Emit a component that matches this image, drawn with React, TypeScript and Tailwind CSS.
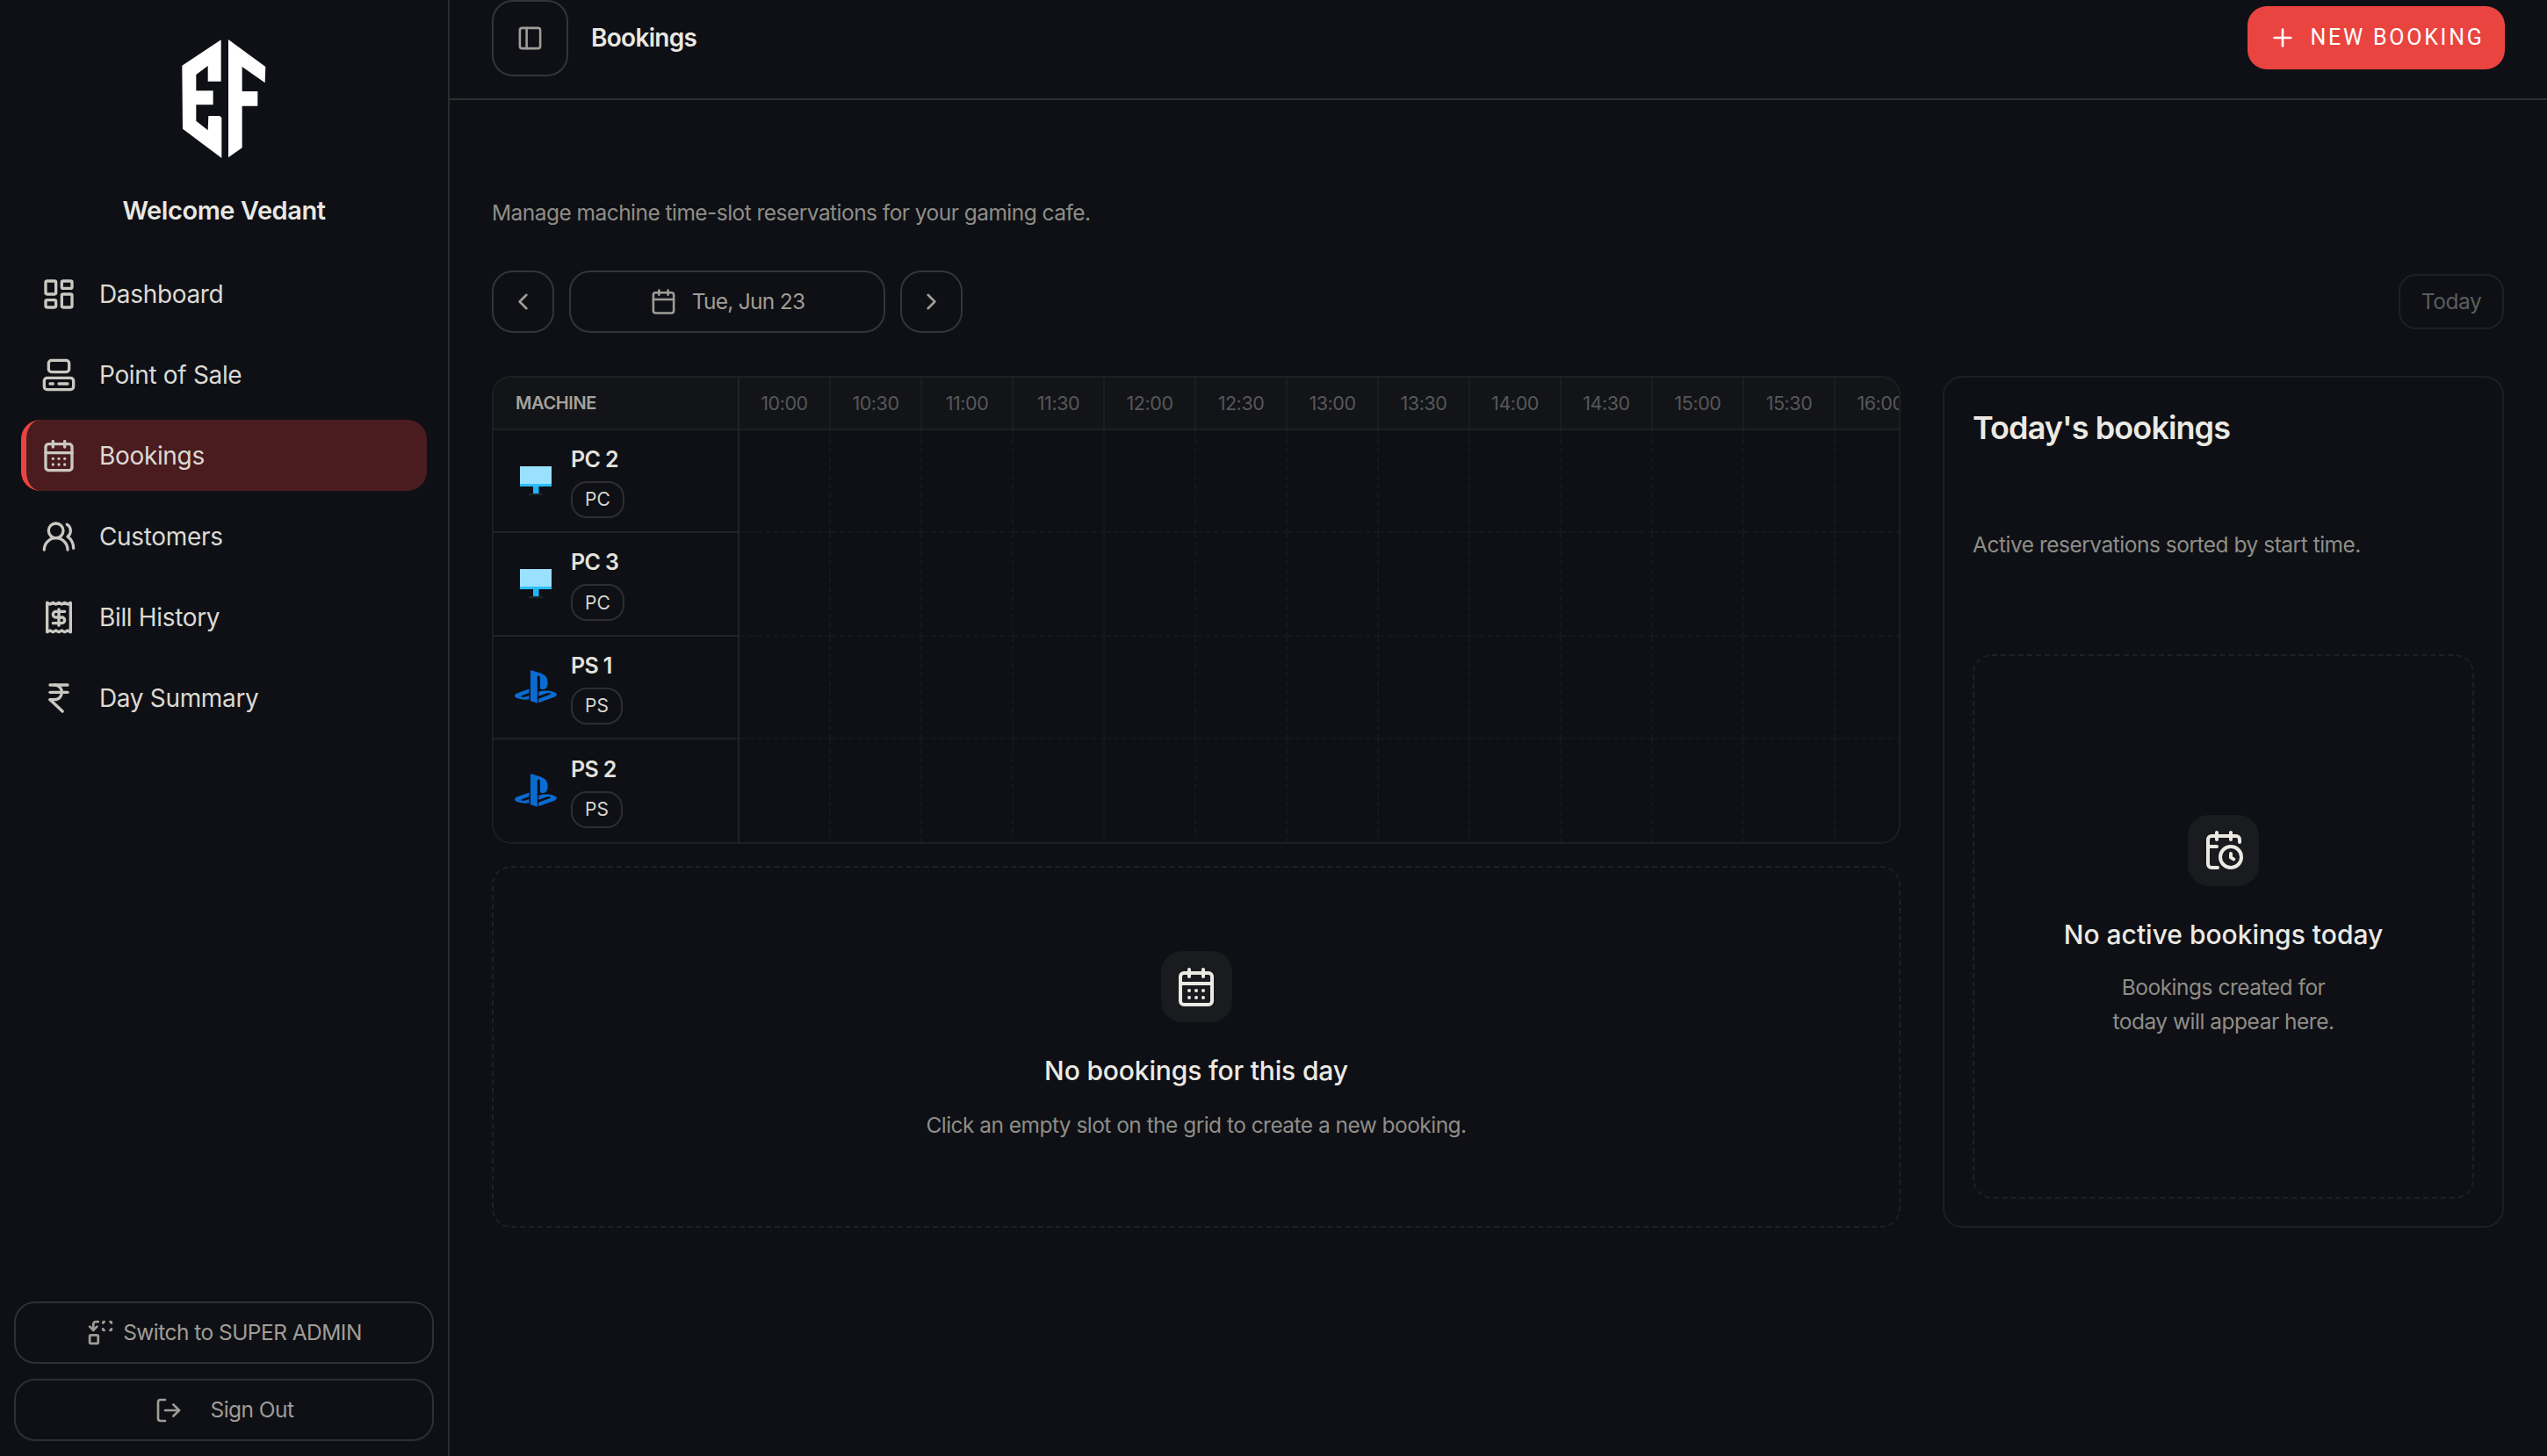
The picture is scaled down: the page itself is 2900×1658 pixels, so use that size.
import {
  Calendar,
  CalendarClock,
  CalendarDays,
  ChevronLeft,
  ChevronRight,
  Computer,
  IndianRupee,
  LayoutDashboard,
  LogOut,
  PanelLeft,
  Plus,
  Receipt,
  Replace,
  UsersRound,
} from 'lucide-react';
import { SiPlaystation } from 'react-icons/si';

const navItems = [
  { label: 'Dashboard', icon: LayoutDashboard },
  { label: 'Point of Sale', icon: Computer },
  { label: 'Bookings', icon: CalendarDays, active: true },
  { label: 'Customers', icon: UsersRound },
  { label: 'Bill History', icon: Receipt },
  { label: 'Day Summary', icon: IndianRupee },
];

const times = [
  '10:00', '10:30', '11:00', '11:30', '12:00', '12:30', '13:00',
  '13:30', '14:00', '14:30', '15:00', '15:30', '16:00',
];

const machines = [
  { name: 'PC 2', type: 'PC' },
  { name: 'PC 3', type: 'PC' },
  { name: 'PS 1', type: 'PS' },
  { name: 'PS 2', type: 'PS' },
];

function Logo() {
  return (
    <svg viewBox="0 0 330 435" className="mt-[40px] h-[145px] w-[110px] self-center" fill="#ffffff">
      <polygon points="155,16 22,104 24,320 157,420 157,282 150,276 112,276 110,325 70,293 70,238 128,238 128,190 70,190 70,135 110,105 110,158 155,158" />
      <polygon points="180,15 307,108 305,163 227,108 227,192 280,192 280,242 227,242 227,385 180,418" />
    </svg>
  );
}

function MonitorIcon() {
  return (
    <svg viewBox="0 0 36 33" className="h-[33px] w-[36px]">
      <rect x="0" y="0" width="36" height="20" fill="#99e1ff" />
      <rect x="0" y="20" width="36" height="3" fill="#2dbcff" />
      <rect x="15" y="23" width="6.5" height="8" fill="#1eb4f5" />
      <rect x="10" y="31.5" width="16" height="1" fill="#2c3a44" />
    </svg>
  );
}

function Sidebar() {
  return (
    <aside className="flex h-full w-[512px] shrink-0 flex-col border-r-2 border-[#2a2b2d]">
      <Logo />
      <div className="mt-[35px] h-[40px] text-center text-[29px] leading-[40px] font-semibold tracking-[-0.015em] text-[#e9e7e1]">
        Welcome Vedant
      </div>
      <nav className="mt-[34px] flex flex-col gap-[11px] px-[24px]">
        {navItems.map((item) => (
          <div
            key={item.label}
            className={`flex h-[81px] items-center gap-[26px] rounded-[22px] border-l-[6px] pl-[17px] text-[28px] tracking-[-0.012em] text-[#dcd9d3] ${
              item.active ? 'border-[#ea4440] bg-[#4a1c1f]' : 'border-transparent'
            }`}
          >
            <item.icon className="size-[40px] text-[#cbc8c2]" />
            <span>{item.label}</span>
          </div>
        ))}
      </nav>
      <div className="mt-auto flex flex-col gap-[17px] px-[16px] pb-[17px] text-[24.5px] tracking-[-0.022em] text-[#a09d97]">
        <button className="flex h-[71px] items-center justify-center gap-[9px] rounded-[24px] border-2 border-[#2f3032]">
          <Replace className="size-[33px]" />
          <span>Switch to SUPER ADMIN</span>
        </button>
        <button className="flex h-[71px] items-center justify-center gap-[32px] rounded-[24px] border-2 border-[#2f3032]">
          <LogOut className="size-[32px]" />
          <span>Sign Out</span>
        </button>
      </div>
    </aside>
  );
}

function BookingGrid() {
  return (
    <div className="overflow-hidden rounded-[22px] border-2 border-[#1e1f22]">
      <div className="flex h-[60px] border-b-2 border-[#1e1f22] bg-[#131418]">
        <div className="flex w-[280px] shrink-0 items-center border-r-2 border-[#222326] pl-[25px] text-[20px] font-semibold tracking-[-0.02em] text-[#a5a29c]">
          MACHINE
        </div>
        {times.map((t) => (
          <div
            key={t}
            className="flex w-[104px] shrink-0 items-center justify-center border-r-2 border-[#1c1d20] text-[21.5px] tracking-[-0.02em] whitespace-nowrap text-[#57575a]"
          >
            {t}
          </div>
        ))}
      </div>
      {machines.map((m, i) => (
        <div key={m.name} className="flex h-[117.25px]">
          <div
            className={`flex w-[280px] shrink-0 items-center gap-[16px] border-r-2 border-[#222326] pl-[24px] ${
              i < machines.length - 1 ? 'border-b-2' : ''
            }`}
          >
            <div className="flex w-[48px] justify-center">
              {m.type === 'PC' ? (
                <MonitorIcon />
              ) : (
                <SiPlaystation className="size-[48px] text-[#0a6bd0]" />
              )}
            </div>
            <div className="flex flex-col items-start gap-[7px]">
              <span className="text-[25px] leading-[36px] font-semibold tracking-[-0.025em] text-[#e4e2dc]">
                {m.name}
              </span>
              <span className="flex h-[42px] items-center rounded-[18px] border-2 border-[#2e2e31] px-[14px] text-[21px] text-[#d7d5d0]">
                {m.type}
              </span>
            </div>
          </div>
          {times.map((t) => (
            <div
              key={t}
              className={`w-[104px] shrink-0 border-r-2 border-dashed border-[#16171b] ${
                i < machines.length - 1 ? 'border-b-2' : ''
              }`}
            />
          ))}
        </div>
      ))}
    </div>
  );
}

export default function App() {
  return (
    <div className="flex h-screen w-full overflow-hidden bg-[#0e1015] font-['Inter',sans-serif]">
      <Sidebar />
      <main className="flex min-w-0 flex-1 flex-col">
        <header className="flex h-[114px] shrink-0 items-center justify-between border-b-2 border-[#2d2e30] pr-[48px] pb-[26px] pl-[48px]">
          <div className="flex items-center gap-[26px]">
            <button className="flex size-[87px] items-center justify-center rounded-[24px] border-2 border-[#343537]">
              <PanelLeft className="size-[31px] text-[#a09d97]" />
            </button>
            <span className="text-[28px] font-semibold tracking-[-0.025em] text-[#e9e7e1]">Bookings</span>
          </div>
          <button className="flex h-[72px] w-[293px] items-center justify-center gap-[16px] rounded-[22px] bg-[#ea4440] font-['Roboto',sans-serif] text-[25px] tracking-[0.11em] text-white">
            <Plus className="size-[32px]" />
            <span>NEW BOOKING</span>
          </button>
        </header>

        <div className="flex flex-1 flex-col pt-[108px] pr-[49px] pl-[48px]">
          <p className="h-[40px] text-[24.5px] leading-[40px] tracking-[-0.022em] text-[#8f8d87]">
            Manage machine time-slot reservations for your gaming cafe.
          </p>

          <div className="mt-[46px] flex h-[71px] items-center justify-between">
            <div className="flex items-center gap-[17px] text-[#a09d97]">
              <button className="flex h-[71px] w-[71px] items-center justify-center rounded-[24px] border-2 border-[#343537]">
                <ChevronLeft className="size-[31px]" />
              </button>
              <button className="flex h-[71px] w-[360px] items-center justify-center gap-[17px] rounded-[24px] border-2 border-[#343537] text-[24.5px] tracking-[-0.03em]">
                <Calendar className="size-[31px]" />
                <span>Tue, Jun 23</span>
              </button>
              <button className="flex h-[71px] w-[71px] items-center justify-center rounded-[24px] border-2 border-[#343537]">
                <ChevronRight className="size-[31px]" />
              </button>
            </div>
            <button className="flex h-[63px] w-[120px] items-center justify-center rounded-[20px] border-2 border-[#1f2023] text-[24.5px] tracking-[-0.02em] text-[#5c5c5c]">
              Today
            </button>
          </div>

          <div className="mt-[49px] flex h-[970px] gap-[48px]">
            <div className="flex w-[1604px] shrink-0 flex-col gap-[25px]">
              <BookingGrid />
              <div className="flex flex-1 flex-col items-center justify-center rounded-[22px] border-2 border-dashed border-[#1f2023]">
                <div className="flex size-[81px] items-center justify-center rounded-[24px] bg-[#1a1b1e]">
                  <CalendarDays className="size-[48px] text-[#ece9e3]" />
                </div>
                <div className="mt-[35px] text-[30px] leading-[40px] font-medium tracking-[-0.005em] text-[#ece9e3]">
                  No bookings for this day
                </div>
                <div className="mt-[22px] text-[24.5px] leading-[40px] tracking-[-0.022em] text-[#8f8d87]">
                  Click an empty slot on the grid to create a new booking.
                </div>
              </div>
            </div>

            <section className="flex min-w-0 flex-1 flex-col rounded-[22px] border-2 border-[#1e1f22] px-[32px] pt-[34px] pb-[31px]">
              <h2 className="h-[46px] text-[36px] leading-[46px] font-semibold tracking-[-0.025em] text-[#ece9e3]">
                Today's bookings
              </h2>
              <p className="mt-[90px] h-[40px] text-[24.5px] leading-[40px] tracking-[-0.02em] text-[#8f8d87]">
                Active reservations sorted by start time.
              </p>
              <div className="mt-[105px] flex flex-1 flex-col items-center justify-center rounded-[22px] border-2 border-dashed border-[#1f2023]">
                <div className="flex size-[81px] items-center justify-center rounded-[24px] bg-[#1a1b1e]">
                  <CalendarClock className="size-[48px] text-[#ece9e3]" />
                </div>
                <div className="mt-[35px] text-[30px] leading-[40px] font-medium text-[#ece9e3]">
                  No active bookings today
                </div>
                <div className="mt-[21px] text-center text-[24.5px] leading-[39px] tracking-[-0.02em] text-[#8f8d87]">
                  Bookings created for
                  <br />
                  today will appear here.
                </div>
              </div>
            </section>
          </div>
        </div>
      </main>
    </div>
  );
}
